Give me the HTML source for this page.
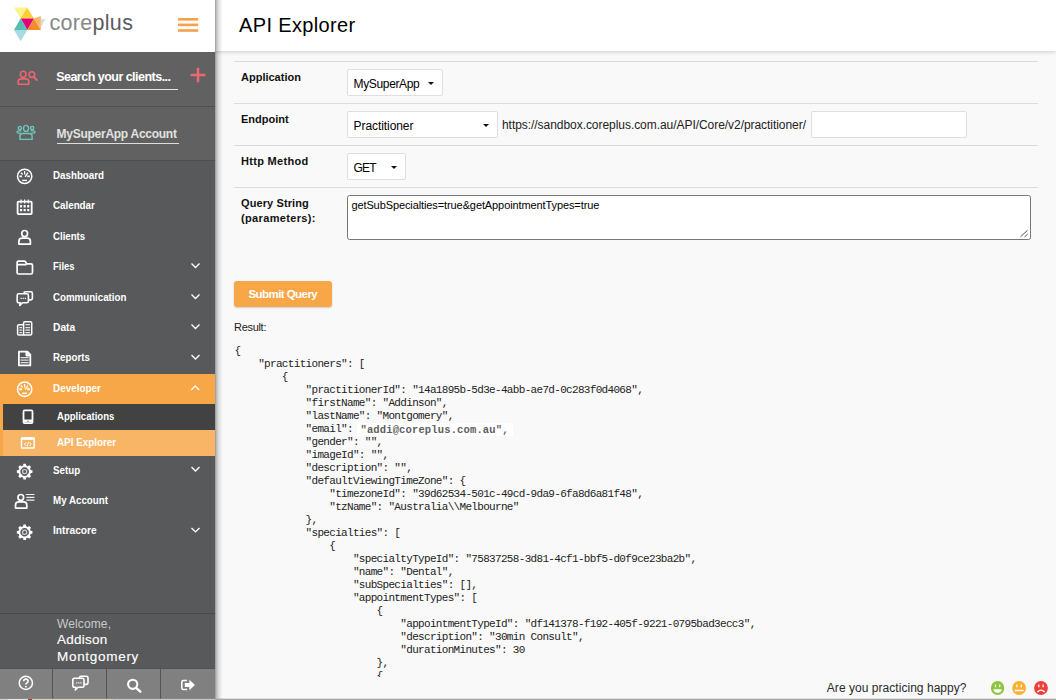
<!DOCTYPE html>
<html lang="en">
<head>
<meta charset="utf-8">
<title>API Explorer - coreplus</title>
<style>
*{box-sizing:border-box;margin:0;padding:0}
html,body{width:1056px;height:700px;overflow:hidden;background:#f9f9f9;font-family:"Liberation Sans",sans-serif;color:#222}
.t{position:absolute;white-space:pre;line-height:1;transform-origin:0 50%}
svg{position:absolute;overflow:visible}
#icons{z-index:2;pointer-events:none}

/* ---------- sidebar ---------- */
#side{position:absolute;left:0;top:0;width:215px;height:699px;background:#58595b;z-index:3}
#side:after{content:"";position:absolute;left:215px;top:0;width:9px;height:699px;background:linear-gradient(to right,rgba(0,0,0,.42) 0,rgba(0,0,0,.27) 1px,rgba(0,0,0,.13) 3.5px,rgba(0,0,0,.04) 6px,rgba(0,0,0,0) 8.5px)}
#brand{position:absolute;left:0;top:0;width:215px;height:52px;background:#fff}
#brand .core{color:#85878a}
#brand .plus{color:#5b5c5f}
#search{position:absolute;left:0;top:52px;width:215px;height:54px;background:#616161}
#account{position:absolute;left:0;top:106px;width:215px;height:55px;background:#616161;border-top:1px solid #4e4e4e;border-bottom:1px solid #4e4e4e}
.uline{position:absolute;height:1px;background:#e4e4e4}
#nav{position:absolute;left:0;top:161px;width:215px;list-style:none}
#nav li{position:relative;height:30.4px;color:#fff;font-weight:bold;font-size:11.5px}
#nav li.open{background:#f8a748}
#nav li.sub{height:26px;background:#424242;border-left:3px solid #f8a748}
#nav li.sub.cur{background:#f9b566}
#nav .t{left:53px;top:8.6px;transform:scaleX(.85)}
#nav li.sub .t{left:54.4px;top:6.6px;transform:scaleX(.83)}
#nav li.sub.cur .t{transform:scaleX(.857)}
#nav svg.chev{left:190.5px;top:11.6px}
#welcome{position:absolute;left:0;top:613px;width:215px;height:56px;border-top:1px solid #4a4b4d;color:#fff}
#welcome .nm{font-size:13.5px;-webkit-text-stroke:.12px #fff}
#tools{position:absolute;left:0;top:668px;width:215px;height:31px;background:#808080;border-top:1px solid #525355}
#tools i{position:absolute;top:0;width:1px;height:30px;background:#545454}

/* ---------- main ---------- */
#head{position:absolute;left:215px;top:0;width:841px;height:51px;background:#fff;box-shadow:0 1px 4px rgba(0,0,0,.18);z-index:2}
#head h1{font-weight:normal;font-size:20px;color:#000;left:24px;top:14.8px;letter-spacing:.36px}
#form{position:absolute;left:234px;top:61px;width:804px;border-collapse:collapse}
.row{position:absolute;left:234px;width:804px;border-top:1px solid #dcdcdc}
.lbl{font-weight:bold;font-size:11px;color:#111}
.sel{position:absolute;height:27px;background:#fff;border:1px solid #dfdfdf;border-radius:2px;font-size:12px;color:#000}
.sel.dd:after{content:"";position:absolute;right:8px;top:11.5px;border:3px solid transparent;border-top-color:#111;border-bottom-width:0}
#qs{position:absolute;left:347px;top:195px;width:684px;height:45px;background:#fff;border:1px solid #777;border-radius:2.5px;font-size:11px;color:#000}
#btn{position:absolute;left:234px;top:281px;width:98px;height:26px;background:#f8a748;border-radius:3px;color:#fff;font-weight:bold;font-size:11.5px;box-shadow:0 1px 2px rgba(0,0,0,.18)}
#json{position:absolute;left:234.5px;top:345.2px;font-family:"Liberation Mono",monospace;font-size:11px;line-height:13px;letter-spacing:-.68px;color:#222;white-space:pre}
#json mark{font-family:"Liberation Mono",monospace;font-weight:bold;font-size:10.5px;background:#fff;color:#5e5e5e;padding:.5px 4px .5px 3px;margin-left:-1.4px;letter-spacing:.14px}
#foot{position:absolute;left:215px;top:677px;width:841px;height:22px;background:#f9f9f9;z-index:1;font-size:12px;color:#2a2a2a}
#edge{position:absolute;left:0;top:698px;width:1056px;height:2px;background:linear-gradient(rgba(160,160,160,.3) 0,rgba(160,160,160,.3) 1px,#a6a6a6 1px);z-index:5}
#edge b{position:absolute;left:0;top:1px;width:215px;height:1px;background:linear-gradient(to right,#d4d4d4 0,#d4d4d4 8px,#e6e6e6 8px,#e6e6e6 28px,#b5332e 28px,#b5332e 32px,#d6cfb4 32px,#d6cfb4 113px,#c6c6c6 113px)}
</style>
</head>
<body>

<div id="side">
  <div id="brand">
    <svg width="34" height="36" viewBox="0 0 34 36" style="left:13px;top:7px">
      <polygon points="1,.5 14,.5 7.6,11.6" fill="#fff28a"/>
      <polygon points="14,.5 21,11.6 7.6,11.6" fill="#ffcf33"/>
      <polygon points="7.6,11.6 21,11.6 14.4,23" fill="#e2007a"/>
      <polygon points="7.6,11.6 14.4,23 1,23" fill="#52bfb1"/>
      <polygon points="1,23 14.4,23 7.6,34.3" fill="#a7dbe2"/>
      <polygon points="21,11.6 27.9,23 14.4,23" fill="#f68b2c"/>
      <polygon points="21,11.6 27.9,9 27.9,23" fill="#fbb567"/>
      <polygon points="27.9,12 32.4,12 27.9,20.5" fill="#dcdde0"/>
    </svg>
    <span class="t" style="left:49.4px;top:12.8px;font-size:21.5px;letter-spacing:.32px"><span class="core">core</span><span class="plus">plus</span></span>
    <svg width="20" height="14" viewBox="0 0 20 14" style="left:178px;top:18px">
      <rect x="0" y="0" width="20.2" height="2.6" fill="#f8a04a"/>
      <rect x="0" y="5.6" width="20.2" height="2.6" fill="#f8a04a"/>
      <rect x="0" y="11.2" width="20.2" height="2.6" fill="#f8a04a"/>
    </svg>
  </div>

  <div id="search">
    <svg width="21" height="16" viewBox="0 0 21 16" style="left:16.5px;top:18px" fill="none" stroke="#ec6571" stroke-width="1.6" stroke-linejoin="round">
      <ellipse cx="6.2" cy="4.3" rx="2.8" ry="3"/>
      <path d="M1.2 14.3V11.6Q1.2 8.9 3.9 8.9H9.1Q11.8 8.9 11.8 11.6V14.3Z"/>
      <circle cx="14.9" cy="4.6" r="2.8"/>
      <path d="M17.1 7L19.6 9.9" stroke-width="2" stroke-linecap="round"/>
    </svg>
    <span class="t" style="left:56.2px;top:19.4px;font-size:12.5px;font-weight:bold;color:#fff;letter-spacing:-.52px">Search your clients...</span>
    <div class="uline" style="left:56px;top:37px;width:122px"></div>
    <svg width="16" height="16" viewBox="0 0 16 16" style="left:189.5px;top:15px" stroke="#ee6873" stroke-width="2.5">
      <path d="M8 .7V15.3M.7 8H15.3"/>
    </svg>
  </div>

  <div id="account">
    <svg width="21" height="16" viewBox="0 0 21 16" style="left:15.7px;top:18px" fill="none" stroke="#6fc7bb" stroke-width="1.4" stroke-linejoin="round">
      <circle cx="3.9" cy="3" r="1.6"/>
      <circle cx="16.1" cy="3" r="1.6"/>
      <path d="M5.4 5.9H2.3Q1 5.9 1 7.1Q1 8.2 2.3 8.2H4.6M14.6 5.9H17.7Q19 5.9 19 7.1Q19 8.2 17.7 8.2H15.4" stroke-width="1.3"/>
      <ellipse cx="10" cy="3.4" rx="2.5" ry="3"/>
      <path d="M3.9 14.4V11.2Q3.9 8.5 6.6 8.5H13.4Q16.1 8.5 16.1 11.2V14.4Z"/>
    </svg>
    <span class="t" style="left:56.6px;top:20.5px;font-size:12px;font-weight:bold;color:#e2e2e2;letter-spacing:-.27px">MySuperApp Account</span>
    <div class="uline" style="left:57px;top:36px;width:122px;background:#dedede"></div>
  </div>

  <ul id="nav">
    <li><span class="t">Dashboard</span></li>
    <li><span class="t">Calendar</span></li>
    <li><span class="t" style="top:9.3px;transform:scaleX(.84)">Clients</span></li>
    <li><span class="t" style="transform:scaleX(.82)">Files</span></li>
    <li><span class="t" style="top:9.3px;transform:scaleX(.845)">Communication</span></li>
    <li><span class="t" style="transform:scaleX(.89)">Data</span></li>
    <li><span class="t">Reports</span></li>
    <li class="open"><span class="t" style="top:9.4px;transform:scaleX(.86)">Developer</span></li>
    <li class="sub"><span class="t">Applications</span></li>
    <li class="sub cur"><span class="t">API Explorer</span></li>
    <li><span class="t">Setup</span></li>
    <li><span class="t">My Account</span></li>
    <li><span class="t" style="top:7.8px;transform:scaleX(.89)">Intracore</span></li>
  </ul>

  <div id="welcome">
    <span class="t" style="left:57px;top:4.4px;font-size:12px;color:#c9c9c9;letter-spacing:.12px">Welcome,</span>
    <span class="t nm" style="left:57px;top:18.7px;letter-spacing:.25px">Addison</span>
    <span class="t nm" style="left:57px;top:36px;letter-spacing:.7px">Montgomery</span>
  </div>


  <svg id="icons" width="215" height="699" viewBox="0 0 215 699" style="left:0;top:0" fill="none" stroke="#fff" stroke-width="1.6" stroke-linejoin="round">
    <defs>
      <g id="gauge">
        <circle r="7.15" stroke-width="1.55"/>
        <path d="M-5.2 .1H-2.6M2.6 .1H5.2" stroke-width="1.9"/>
        <path d="M-3.7 -3.7L-2 -1.8M0 -5.3V-1.7M3.3 -3.6L.5 .5" stroke-width="1.3"/>
        <path d="M-2.5 4.1H2.4" stroke-width="1.4"/>
      </g>
      <g id="gear">
        <path d="M5.99 -1.59L7.80 -1.24L7.80 1.24L5.99 1.59L5.36 3.11L6.39 4.64L4.64 6.39L3.11 5.36L1.59 5.99L1.24 7.80L-1.24 7.80L-1.59 5.99L-3.11 5.36L-4.64 6.39L-6.39 4.64L-5.36 3.11L-5.99 1.59L-7.80 1.24L-7.80 -1.24L-5.99 -1.59L-5.36 -3.11L-6.39 -4.64L-4.64 -6.39L-3.11 -5.36L-1.59 -5.99L-1.24 -7.80L1.24 -7.80L1.59 -5.99L3.11 -5.36L4.64 -6.39L6.39 -4.64L5.36 -3.11ZM4.30 0A4.30 4.30 0 1 0 -4.30 0A4.30 4.30 0 1 0 4.30 0Z" fill="#fff" fill-rule="evenodd" stroke="none"/>
        <circle r="2.1" stroke-width="1.2" stroke-opacity=".75"/>
        <path d="M-3.6 -3.6L-2 -2M3.6 -3.6L2 -2M-3.6 3.6L-2 2M3.6 3.6L2 2" stroke-width=".9" stroke-opacity=".6"/>
      </g>
      <g id="chev"><path d="M-4 -2.1L0 1.9L4 -2.1" stroke-width="1.35" stroke-linejoin="miter"/></g>
      <g id="chat">
        <path d="M7.5 2.6V2.4Q7.5 .8 9.1 .8H14.4Q16 .8 16 2.4V7.4Q16 9 14.4 9H12.4"/>
        <path d="M1.6 2.9H9.6Q11.2 2.9 11.2 4.5V10.3Q11.2 11.9 9.6 11.9H5.2L2.6 14.6L3 11.9H1.6Q0 11.9 0 10.3V4.5Q0 2.9 1.6 2.9Z" transform="translate(.8 0)"/>
        <path d="M4.1 7.5H5.3M6.2 7.5H7.4M8.3 7.5H9.5" stroke-width="1.3"/>
      </g>
    </defs>
    <!-- dashboard -->
    <use href="#gauge" x="24.65" y="176.3"/>
    <!-- calendar -->
    <g>
      <rect x="17.6" y="201.7" width="14.1" height="12.4" rx=".8" stroke-width="1.8"/>
      <path d="M21 199.6V203.6M24.65 199.6V203.6M28.3 199.6V203.6" stroke-width="1.2"/>
      <path d="M20 206.3H29.3M20 210.1H29.3" stroke-width="2.4" stroke-dasharray="2.1 1.5"/>
    </g>
    <!-- clients -->
    <g stroke-width="1.7">
      <ellipse cx="24.65" cy="233.6" rx="2.9" ry="3.1"/>
      <path d="M18.9 244.1V241.4Q18.9 238.1 22.2 238.1H27.1Q30.4 238.1 30.4 241.4V244.1Z"/>
    </g>
    <!-- files -->
    <path d="M17.1 262.6Q17.1 261.1 18.6 261.1H24.3Q25.6 261.1 26 262.4L26.4 263.9H31Q32.5 263.9 32.5 265.4V272.5Q32.5 274 31 274H18.6Q17.1 274 17.1 272.5ZM17.1 264.6H26.4" stroke-width="1.7"/>
    <!-- communication -->
    <use href="#chat" x="16.4" y="290.9"/>
    <!-- data -->
    <g stroke-width="1.5">
      <path d="M23.6 324.8V323Q23.6 321.7 24.9 321.7H30.4Q31.7 321.7 31.7 323V333.7Q31.7 335 30.4 335H18.9Q17.6 335 17.6 333.7V326.1Q17.6 324.8 18.9 324.8H23.6V335"/>
      <path d="M19.4 327.6H22M19.4 330.2H22M19.4 332.6H22M25.4 324.6H30M25.4 327.6H30M25.4 330.2H30M25.4 332.6H30" stroke-width="1.3" stroke-opacity=".85"/>
    </g>
    <!-- reports -->
    <g>
      <path d="M18.9 351.7H27.4L30.3 354.6V365.4H18.9Z" stroke-width="1.8"/>
      <path d="M26 351.7V356H30.3Z" fill="#fff" stroke-width="1"/>
      <path d="M20.6 357.6H28.6M20.6 360.2H28.6M20.6 362.6H28.6" stroke-width="1.2" stroke-opacity=".8"/>
    </g>
    <!-- developer -->
    <use href="#gauge" x="24.65" y="389.2"/>
    <!-- applications (phone) -->
    <g>
      <rect x="23.5" y="410.4" width="9" height="12.7" rx="1" stroke-width="1.8"/>
      <path d="M24 420.8H32" stroke-width="2.6"/>
      <path d="M27.4 421.2H28.6" stroke="#424242" stroke-width="1.1"/>
    </g>
    <!-- api explorer -->
    <g>
      <rect x="21.5" y="437.9" width="12.7" height="10.1" stroke-width="1.4"/>
      <path d="M21.5 438.6H34.2" stroke-width="2.6"/>
      <path d="M26.1 442.2L24.5 444.1L26.1 446M29.6 442.2L31.2 444.1L29.6 446M28.5 441.8L27.2 446.4" stroke-width="1"/>
    </g>
    <!-- setup -->
    <use href="#gear" x="24.65" y="471.6"/>
    <!-- my account -->
    <g stroke-width="1.7">
      <ellipse cx="20.8" cy="497.4" rx="2.8" ry="2.9"/>
      <path d="M15.5 508.1V505.2Q15.5 501.9 18.8 501.9H23.5Q26.8 501.9 26.8 505.2V508.1Z"/>
      <path d="M25.8 494.5H34.4M26.4 497.4H34.4M26.4 500.2H34.4" stroke-width="1.2" stroke-opacity=".9"/>
    </g>
    <!-- intracore -->
    <use href="#gear" x="24.65" y="532.3"/>
    <!-- chevrons -->
    <use href="#chev" x="195.5" y="265.6"/>
    <use href="#chev" x="195.5" y="296.6"/>
    <use href="#chev" x="195.5" y="326.6"/>
    <use href="#chev" x="195.5" y="357.2"/>
    <use href="#chev" x="195.2" y="387.8" transform="rotate(180 195.2 387.8)"/>
    <use href="#chev" x="195.5" y="469.2"/>
    <use href="#chev" x="195.5" y="530"/>
    <!-- toolbar -->
    <g>
      <circle cx="25.85" cy="682.9" r="6.6" stroke-width="1.5"/>
      <path d="M23.7 681.2Q23.7 679.1 25.9 679.1Q28.1 679.1 28.1 681.1Q28.1 682.4 26.9 683Q25.9 683.5 25.9 684.6" stroke-width="1.6"/>
      <circle cx="25.9" cy="686.6" r=".95" fill="#fff" stroke="none"/>
    </g>
    <use href="#chat" x="72" y="675.4"/>
    <g stroke-width="2.1">
      <circle cx="132.7" cy="684.3" r="4.6"/>
      <path d="M136.2 687.8L140.3 691.6" stroke-width="2.5" stroke-linecap="round"/>
    </g>
    <g>
      <path d="M187 680.5H183.4Q181.8 680.5 181.8 682.1V687.9Q181.8 689.5 183.4 689.5H187" stroke-width="1.5"/>
      <path d="M184.8 682.9H189.4V679.8L194.9 685L189.4 690.2V687H184.8Z" fill="#fff" stroke="none"/>
    </g>
  </svg>

  <div id="tools">
    <i style="left:52px"></i><i style="left:106px"></i><i style="left:160px"></i>
  </div>
</div>

<div id="head"><h1 class="t">API Explorer</h1></div>

<div class="row" style="top:61px"></div>
<div class="row" style="top:103px"></div>
<div class="row" style="top:145px"></div>
<div class="row" style="top:187px"></div>

<span class="t lbl" style="left:241px;top:71.6px">Application</span>
<span class="t lbl" style="left:241px;top:113.9px">Endpoint</span>
<span class="t lbl" style="left:241px;top:155.6px;letter-spacing:.3px">Http Method</span>
<span class="t lbl" style="left:241px;top:198px;letter-spacing:.1px">Query String</span>
<span class="t lbl" style="left:241px;top:212.6px;letter-spacing:.35px">(parameters):</span>

<div class="sel dd" style="left:347px;top:69px;width:96px"><span class="t" style="left:5.6px;top:8.3px;letter-spacing:-.36px">MySuperApp</span></div>
<div class="sel dd" style="left:347px;top:111px;width:151px"><span class="t" style="left:5.6px;top:8.3px;letter-spacing:-.08px">Practitioner</span></div>
<span class="t" style="left:502px;top:118.9px;font-size:12px;letter-spacing:-.05px">https://sandbox.coreplus.com.au/API/Core/v2/practitioner/</span>
<div class="sel" style="left:811px;top:111px;width:156px;border-radius:2px" id="tail"></div>
<div class="sel dd" style="left:347px;top:153px;width:59px"><span class="t" style="left:5.6px;top:8.3px;letter-spacing:-.9px">GET</span></div>

<div id="qs"><span class="t" style="left:3.4px;top:4.4px;letter-spacing:-.1px">getSubSpecialties=true&amp;getAppointmentTypes=true</span><svg width="9" height="9" viewBox="0 0 9 9" style="right:1px;bottom:1px" stroke="#4f4f4f" stroke-width="1" fill="none"><path d="M.6 7.8L7.6 1.2M4.6 7.9L7.7 5"/></svg></div>

<div id="btn"><span class="t" style="left:14.4px;top:8.2px;letter-spacing:-.55px">Submit Query</span></div>
<span class="t" style="left:234px;top:321.5px;font-size:11px;letter-spacing:-.3px">Result:</span>

<pre id="json">{
    "practitioners": [
        {
            "practitionerId": "14a1895b-5d3e-4abb-ae7d-0c283f0d4068",
            "firstName": "Addinson",
            "lastName": "Montgomery",
            "email": <mark>"addi@coreplus.com.au",</mark>
            "gender": "",
            "imageId": "",
            "description": "",
            "defaultViewingTimeZone": {
                "timezoneId": "39d62534-501c-49cd-9da9-6fa8d6a81f48",
                "tzName": "Australia\\Melbourne"
            },
            "specialties": [
                {
                    "specialtyTypeId": "75837258-3d81-4cf1-bbf5-d0f9ce23ba2b",
                    "name": "Dental",
                    "subSpecialties": [],
                    "appointmentTypes": [
                        {
                            "appointmentTypeId": "df141378-f192-405f-9221-0795bad3ecc3",
                            "description": "30min Consult",
                            "durationMinutes": 30
                        },
                        {
</pre>

<div id="foot">
  <span class="t" style="left:611.8px;top:4.5px;letter-spacing:.04px">Are you practicing happy?</span>
  <svg width="62" height="16" viewBox="0 0 62 16" style="left:775px;top:3px">
    <ellipse cx="7.6" cy="8" rx="6.7" ry="7.1" fill="#8cc63e"/>
    <path d="M5.5 4.4V7.2M9.7 4.4V7.2" stroke="#fff" stroke-width="1.3"/>
    <path d="M3.3 9.2H11.9Q11.2 12.8 7.6 12.8Q4 12.8 3.3 9.2Z" fill="#fff"/>
    <ellipse cx="29.1" cy="8" rx="6.9" ry="7.1" fill="#fbb034"/>
    <path d="M26.9 4.4V7.2M31.3 4.4V7.2" stroke="#fff" stroke-width="1.3"/>
    <path d="M24.7 10.5H33.6" stroke="#fff" stroke-width="1.5"/>
    <ellipse cx="51" cy="8" rx="6.9" ry="7.1" fill="#ee3f38"/>
    <path d="M48.8 4.4V7.2M53.1 4.4V7.2" stroke="#fff" stroke-width="1.3"/>
    <path d="M47.4 12Q51 8.2 54.7 12" fill="none" stroke="#fff" stroke-width="1.3"/>
  </svg>
</div>
<div id="edge"><b></b></div>

</body>
</html>
